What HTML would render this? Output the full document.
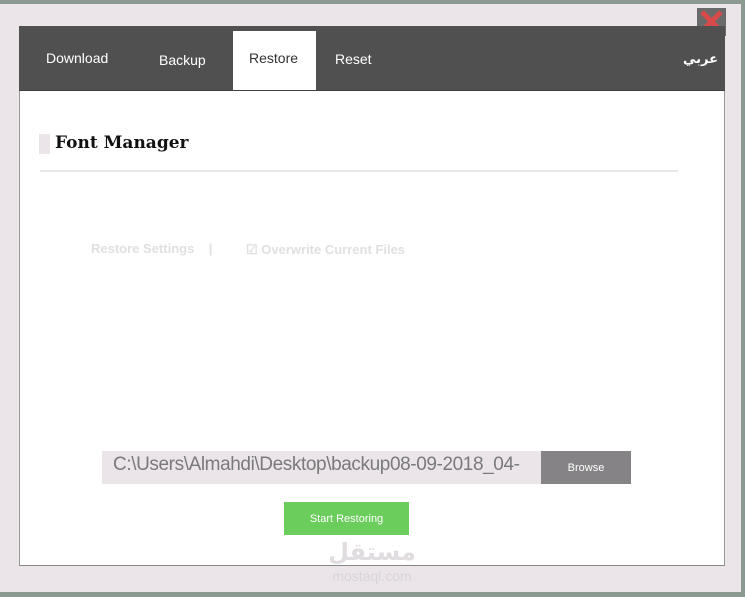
<!DOCTYPE html>
<html><head><style>
body{margin:0;width:745px;height:597px;overflow:hidden;background:#8a9a90;font-family:"Liberation Sans",sans-serif;position:relative}
.win{position:absolute;left:0;top:4px;width:741px;height:588px;background:#ebe5e9}
.hdr{position:absolute;left:19px;top:26px;width:706px;height:64px;background:#505050;border-bottom:2px solid #3f3f3f}
.tab{position:absolute;color:#fff;font-size:14px}
.active{position:absolute;left:233px;top:31px;width:83px;height:59px;background:#fff}
.content{position:absolute;left:19px;top:91px;width:704px;height:474px;background:#fff;border:1px solid #999;border-top:none;border-bottom:1px solid #888}
</style></head><body>
<div class="win"></div>
<div style="position:absolute;left:697px;top:8px;width:29px;height:28px;background:#6a6a6a"></div>
<svg style="position:absolute;left:699px;top:9px" width="25" height="25"><path d="M3 3L22 22M22 3L3 22" stroke="#d84a4a" stroke-width="5"/></svg>
<div class="hdr"></div>
<div class="active"></div>
<div class="tab" style="left:46px;top:50px">Download</div>
<div class="tab" style="left:159px;top:52px">Backup</div>
<div class="tab" style="left:249px;top:50px;color:#333">Restore</div>
<div class="tab" style="left:335px;top:51px">Reset</div>
<div class="tab" style="left:683px;top:52px;font-size:13px;font-weight:bold;font-family:'DejaVu Sans',sans-serif">عربي</div>
<div class="content"></div>
<div style="position:absolute;left:39px;top:134px;width:11px;height:20px;background:#ebe5e9"></div>
<div style="position:absolute;left:55px;top:133px;font-family:'DejaVu Serif',serif;font-weight:bold;font-size:17px;color:#111">Font Manager</div>
<div style="position:absolute;left:40px;top:170px;width:638px;height:2px;background:#eae7e9"></div>
<div style="position:absolute;left:91px;top:241px;font-size:13px;font-weight:bold;color:#e2dfe1">Restore Settings &nbsp;&nbsp;&nbsp;|</div>
<div style="position:absolute;left:246px;top:242px;font-size:13px;font-weight:bold;color:#e2dfe1">☑ Overwrite Current Files</div>
<div style="position:absolute;left:102px;top:451px;width:439px;height:33px;background:#ebe5e9;color:#7a7a7a;font-size:19px;line-height:28px;padding-left:11px;box-sizing:border-box;white-space:nowrap;overflow:hidden;letter-spacing:-0.4px">C:\Users\Almahdi\Desktop\backup08-09-2018_04-</div>
<div style="position:absolute;left:541px;top:451px;width:90px;height:33px;background:#858385;color:#fff;font-size:11px;line-height:34px;text-align:center">Browse</div>
<div style="position:absolute;left:284px;top:502px;width:125px;height:33px;background:#6bcd5b;color:#fff;font-size:11px;line-height:34px;text-align:center">Start Restoring</div>
<div style="position:absolute;left:322px;top:538px;width:100px;text-align:center;color:#e0dcdf;font-size:24px;font-weight:bold;font-family:'DejaVu Sans',sans-serif">مستقل</div>
<div style="position:absolute;left:322px;top:568px;width:100px;text-align:center;color:#d8d4d7;font-size:14px">mostaql.com</div>
</body></html>
